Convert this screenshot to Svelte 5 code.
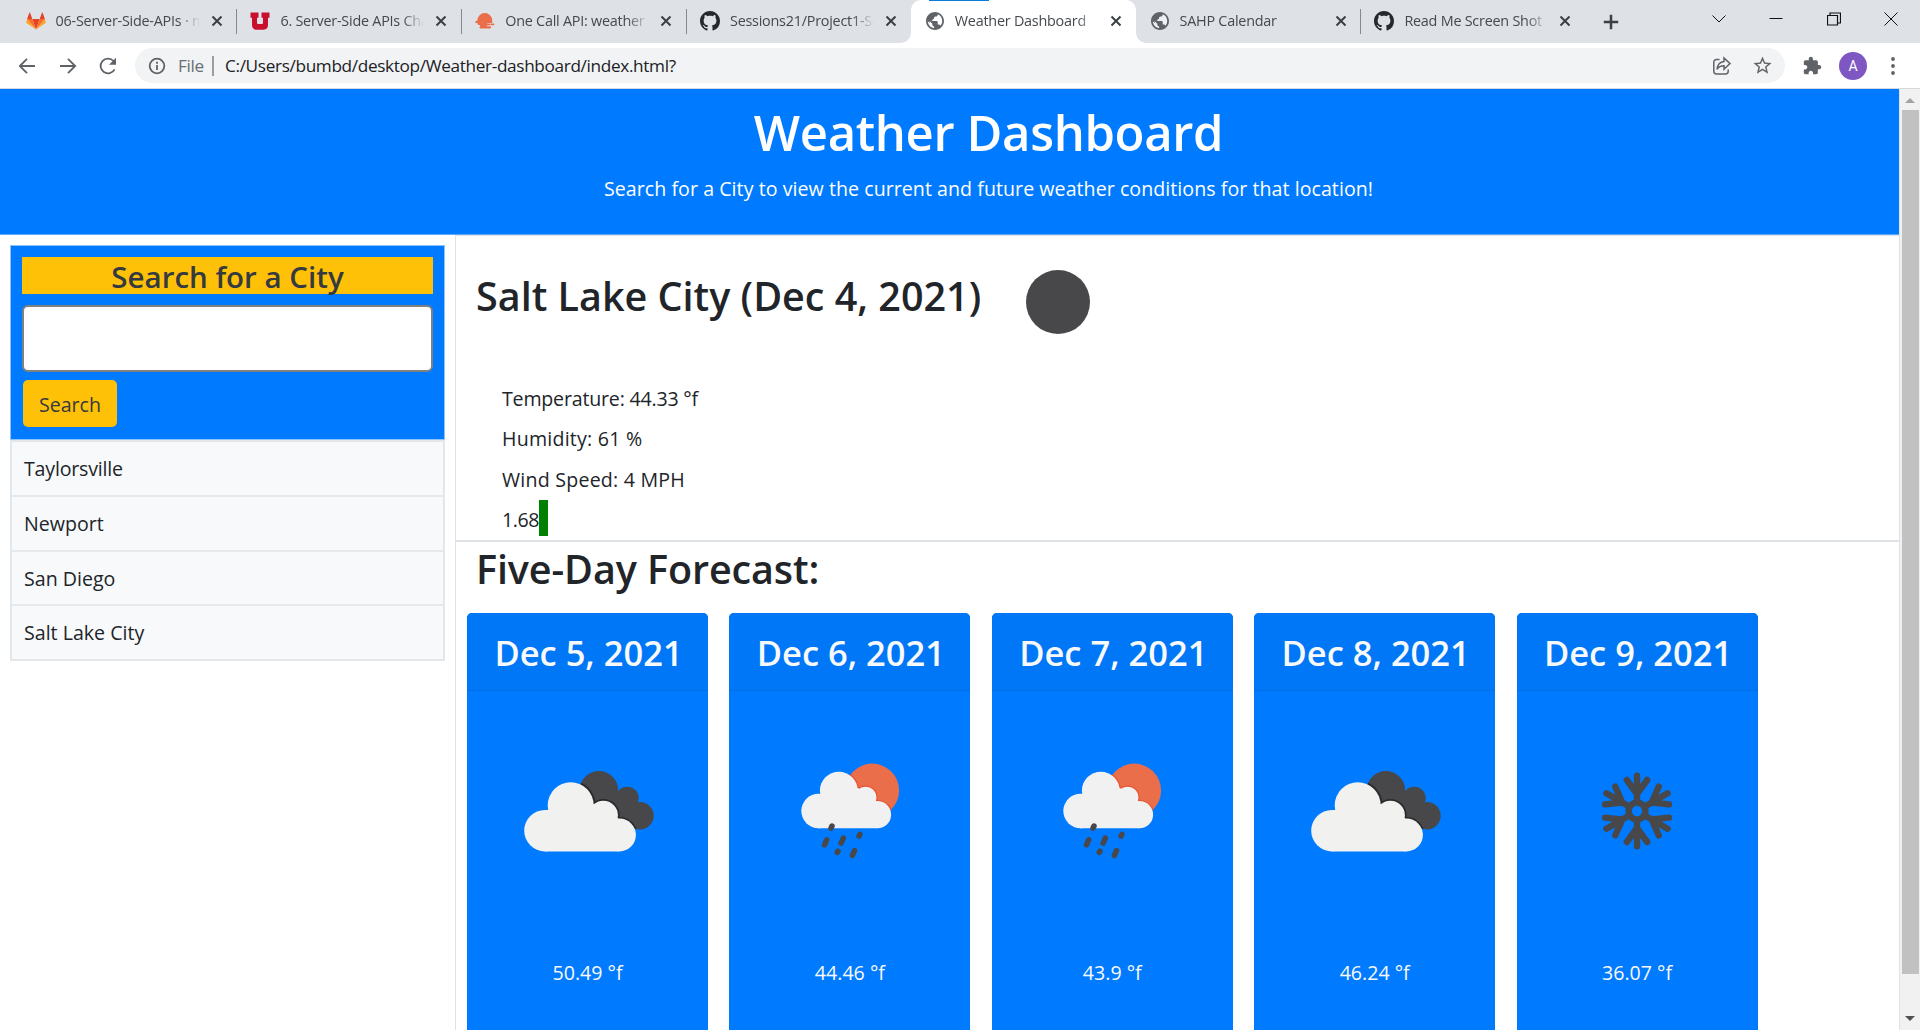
<script>
  const tabs = [
    { title: '06-Server-Side-APIs · main', icon: 'gitlab' },
    { title: '6. Server-Side APIs Challenge', icon: 'utah', sep: true },
    { title: 'One Call API: weather data', icon: 'owm', sep: true },
    { title: 'Sessions21/Project1-Server', icon: 'github', sep: true },
    { title: 'Weather Dashboard', icon: 'globe', active: true },
    { title: 'SAHP Calendar', icon: 'globe' },
    { title: 'Read Me Screen Shot', icon: 'github', sep: true }
  ];
  const cities = ['Taylorsville', 'Newport', 'San Diego', 'Salt Lake City'];
  const forecast = [
    { date: 'Dec 5, 2021', icon: 'clouds', temp: '50.49 °f' },
    { date: 'Dec 6, 2021', icon: 'rain', temp: '44.46 °f' },
    { date: 'Dec 7, 2021', icon: 'rain', temp: '43.9 °f' },
    { date: 'Dec 8, 2021', icon: 'clouds', temp: '46.24 °f' },
    { date: 'Dec 9, 2021', icon: 'snow', temp: '36.07 °f' }
  ];
  const arms = [0, 60, 120, 180, 240, 300];
</script>

<div class="window">
  <div class="strip">
    {#each tabs as t}
      <div class="tab" class:active={t.active} class:sep={t.sep}>
        <svg class="fav" viewBox="0 0 20 20">
          {#if t.icon === 'gitlab'}
            <path fill="#e24329" d="M10 18.5 13.7 8H6.3z" />
            <path fill="#fc6d26" d="M10 18.5 6.3 8H1.1zM10 18.5 13.7 8h5.2z" />
            <path fill="#fca326" d="M1.1 8 .2 11.2c-.1.3 0 .7.3.9L10 18.5zM18.9 8l.9 3.2c.1.3 0 .7-.3.9L10 18.5z" />
            <path fill="#e24329" d="M1.1 8h5.2L4.1 1.8c-.1-.3-.6-.3-.7 0zM18.9 8h-5.2l2.2-6.2c.1-.3.6-.3.7 0z" />
          {:else if t.icon === 'utah'}
            <path fill="#c8102e" d="M.5 1.500h8v5.300H7v4.600c0 1 .6 1.500 1.500 1.500h3c.9 0 1.500-.5 1.500-1.500V6.800h-1.500V1.500h8v5.300H18v7.500c0 2.700-1.700 4.400-4.400 4.400H6.400c-2.700 0-4.400-1.700-4.400-4.400V6.800H.5z" />
          {:else if t.icon === 'owm'}
            <path fill="#eb6e4b" d="M2.400 9.500a7.400 7.400 0 0 1 14.800 0v2.500H1.200a1 1 0 0 1 0-2z" />
            <path fill="#eb6e4b" d="M2 11.500h10.500v2.600H3.200zM5.500 15.200h9.500a1 1 0 0 1 0 2.200H5.500a1.100 1.100 0 0 1 0-2.200zM5 13.500h7v2H5z" />
            <path stroke="#eb6e4b" stroke-width="1.800" stroke-linecap="round" d="M13.500 13.400h.8M16.300 13.400h2.200M12 13.600h0" />
          {:else if t.icon === 'github'}
            <path fill="#24292f" transform="scale(1.25)" d="M8 0C3.58 0 0 3.58 0 8c0 3.54 2.29 6.53 5.47 7.59.4.07.55-.17.55-.38 0-.19-.01-.82-.01-1.49-2.01.37-2.53-.49-2.69-.94-.09-.23-.48-.94-.82-1.13-.28-.15-.68-.52-.01-.53.63-.01 1.08.58 1.23.82.72 1.21 1.87.87 2.33.66.07-.52.28-.87.51-1.07-1.78-.2-3.64-.89-3.64-3.95 0-.87.31-1.59.82-2.15-.08-.2-.36-1.02.08-2.12 0 0 .67-.21 2.2.82.64-.18 1.32-.27 2-.27s1.36.09 2 .27c1.53-1.04 2.2-.82 2.2-.82.44 1.1.16 1.92.08 2.12.51.56.82 1.27.82 2.15 0 3.07-1.87 3.75-3.65 3.95.29.25.54.73.54 1.48 0 1.07-.01 1.93-.01 2.2 0 .21.15.46.55.38A8.01 8.01 0 0 0 16 8c0-4.42-3.58-8-8-8z" />
          {:else}
            <circle cx="10" cy="10" r="8.500" fill="#fff" fill-opacity=".5" />
            <path fill="#5f6368" transform="translate(-.8 -.8) scale(.9)" d="M12 2C6.48 2 2 6.48 2 12s4.48 10 10 10 10-4.48 10-10S17.52 2 12 2zm-1 17.93c-3.95-.49-7-3.85-7-7.93 0-.62.08-1.21.21-1.79L9 15v1c0 1.1.9 2 2 2v1.93zm6.9-2.54c-.26-.81-1-1.39-1.9-1.39h-1v-3c0-.55-.45-1-1-1H8v-2h2c.55 0 1-.45 1-1V7h2c1.1 0 2-.9 2-2v-.41c2.93 1.19 5 4.06 5 7.41 0 2.08-.8 3.97-2.1 5.39z" />
            <path fill="#5f6368" d="M3 6.500 6.500 3l4-.5-.5 3-2 1.500-.5 2.500-3 .5L5 12 2.200 10z" />
          {/if}
        </svg>
        <span class="title">{t.title}</span>
        <svg class="x" viewBox="0 0 12 12"><path d="M1.500 1.500l9 9M10.500 1.500l-9 9" /></svg>
      </div>
    {/each}
    <div class="plus"><svg viewBox="0 0 16 16" width="16" height="16"><path d="M8 .8v14.400M.8 8h14.400" /></svg></div>
    <div class="winbtns">
      <svg viewBox="0 0 14 14"><path d="M.5 3.500 7 10l6.500-6.500" /></svg>
      <svg viewBox="0 0 14 14"><path d="M.5 6.500h13" /></svg>
      <svg viewBox="0 0 14 14"><path d="M.5 3.500h10v9.500H.5zM3 3.500V1h10.500v10H11" stroke-width="1.200" /></svg>
      <svg viewBox="0 0 14 14"><path d="M.5.500l13 13M13.500.500l-13 13" /></svg>
    </div>
    <div class="progress"></div>
  </div>

  <div class="toolbar">
    <div class="nav">
      <svg viewBox="0 0 20 20"><path d="M18 10H3M10 2.800 2.800 10l7.200 7.200" /></svg>
      <svg viewBox="0 0 20 20"><path d="M2 10h15M10 2.800l7.200 7.200-7.200 7.200" /></svg>
      <svg viewBox="0 0 20 20"><path d="M16.600 13.300A7.400 7.400 0 1 1 15.500 5" /><path class="solid" d="M18 1.800v7h-7z" /></svg>
    </div>
    <div class="omni">
      <svg class="info" viewBox="0 0 18 18"><circle cx="9" cy="9" r="7.300" /><path d="M9 8v5M9 4.800v1.900" /></svg>
      <span class="file">File</span>
      <i class="bar"></i>
      <span class="url">C:/Users/bumbd/desktop/Weather-dashboard/index.html?</span>
      <svg class="share" viewBox="0 0 20 20"><path d="M7.500 3.500H4.500A2.700 2.700 0 0 0 1.800 6.200v9A2.700 2.700 0 0 0 4.500 17.900h9a2.700 2.700 0 0 0 2.700-2.700V13.500" /><path d="M12 2v3.500C7.500 6 5.500 9 5 13.300c1.700-2.500 3.800-3.500 7-3.500v3.400l6-5.600z" /></svg>
      <svg class="star" viewBox="1.500 1.500 21 21"><path d="M22 9.240l-7.190-.62L12 2 9.190 8.630 2 9.240l5.460 4.730L5.820 21 12 17.270 18.180 21l-1.630-7.030L22 9.240zM12 15.400l-3.760 2.270 1-4.280-3.320-2.880 4.380-.38L12 6.100l1.710 4.040 4.380.38-3.320 2.880 1 4.280L12 15.400z" /></svg>
    </div>
    <svg class="ext" viewBox="1 0 23 23"><path d="M20.500 11H19V7c0-1.100-.9-2-2-2h-4V3.500C13 2.120 11.880 1 10.500 1S8 2.120 8 3.500V5H4c-1.100 0-1.990.9-1.990 2v3.800H3.500c1.490 0 2.700 1.210 2.700 2.700s-1.210 2.700-2.700 2.700H2V20c0 1.100.9 2 2 2h3.800v-1.500c0-1.490 1.210-2.700 2.700-2.700 1.490 0 2.700 1.210 2.700 2.700V22H17c1.100 0 2-.9 2-2v-4h1.500c1.380 0 2.500-1.120 2.500-2.500S21.880 11 20.500 11z" /></svg>
    <span class="avatar">A</span>
    <svg class="dots" viewBox="0 0 4 18"><circle cx="2" cy="2" r="1.900" /><circle cx="2" cy="9" r="1.900" /><circle cx="2" cy="16" r="1.900" /></svg>
  </div>

  <div class="view">
    <div class="page">
      <header>
        <h1>Weather Dashboard</h1>
        <p class="sub">Search for a City to view the current and future weather conditions for that location!</p>
      </header>
      <div class="columns">
        <aside>
          <form class="search">
            <h2>Search for a City</h2>
            <input type="text" aria-label="City" />
            <button type="button">Search</button>
          </form>
          <ul class="list">
            {#each cities as c}<li>{c}</li>{/each}
          </ul>
        </aside>
        <main>
          <section class="now">
            <div class="head">
              <h2>Salt Lake City (Dec 4, 2021)</h2>
              <span class="moon"></span>
            </div>
            <div class="stats">
              <p class="tight">Temperature: 44.33 °f</p>
              <p class="wide">Humidity: 61 %</p>
              <p class="wide">Wind Speed: 4 MPH</p>
              <p class="uv">1.68<i></i></p>
            </div>
          </section>
          <h2 class="five">Five-Day Forecast:</h2>
          <div class="cards">
            {#each forecast as f, i}
              <article class="card">
                <h3>{f.date}</h3>
                <svg viewBox="0 0 200 200">
                  {#if f.icon === 'clouds'}
                    <defs>
                      <clipPath id="dark{i}"><circle cx="110.900" cy="79.300" r="19.300" /><circle cx="139.200" cy="87.200" r="11.500" /><circle cx="152" cy="104.700" r="13.700" /><path d="M94 88 130 82 152 95V118.400L125 115z" /></clipPath>
                    </defs>
                    <g clip-path="url(#dark{i})">
                      <rect width="200" height="200" fill="#48484a" />
                      <g fill="#2b2b2e"><circle cx="82.700" cy="94.300" r="25" /><circle cx="115.400" cy="104.200" r="16.300" /><circle cx="131.500" cy="124" r="18" /></g>
                    </g>
                    <g fill="#f1f1f0"><circle cx="82.700" cy="94.300" r="23" /><circle cx="56.900" cy="119.700" r="20.700" /><circle cx="115.400" cy="104.200" r="14.500" /><circle cx="131.500" cy="124" r="16.400" /><path d="M57 99h25l24-6 25 15v32.400H57z" /></g>
                  {:else if f.icon === 'rain'}
                    <circle cx="122.200" cy="79.500" r="26.900" fill="#eb6e4b" />
                    <clipPath id="sun{i}"><circle cx="122.200" cy="79.500" r="26.900" /></clipPath>
                    <g fill="#e8532f" clip-path="url(#sun{i})"><circle cx="88.800" cy="79.600" r="20.200" /><circle cx="115.600" cy="86.500" r="12" /><circle cx="127.500" cy="103.700" r="14.800" /></g>
                    <g fill="#f1f1f2"><circle cx="88.800" cy="79.600" r="18.900" /><circle cx="68.600" cy="100" r="17.300" /><circle cx="115.600" cy="86.500" r="10.800" /><circle cx="127.500" cy="103.700" r="13.600" /><path d="M68 83h20l20-6 19 14v26.300H68z" /></g>
                    <path class="drops" d="M82 115l-1 2.200M76.700 128.800l-2.200 5M93.300 127.100l-2.200 5M109.900 123.500l-.9 1.600M88 140.200l-.8 1.200M104.500 139.600l-2.100 4.800" />
                  {:else}
                    <g class="flake" transform="translate(100 100)">
                      <circle r="8.400" />
                      {#each arms as a}<path transform="rotate({a})" d="M0-10V-35.300M-10.200-31 0-17 10.200-31" />{/each}
                    </g>
                  {/if}
                </svg>
                <p>{f.temp}</p>
              </article>
            {/each}
          </div>
        </main>
      </div>
    </div>
    <div class="scroll">
      <svg viewBox="0 0 10 5"><path fill="#a3a3a3" d="M0 5 5 0l5 5z" /></svg>
      <div class="thumb"></div>
      <svg viewBox="0 0 10 5"><path fill="#505050" d="M0 0h10L5 5z" /></svg>
    </div>
  </div>
</div>

<style>
  :global(body) { margin: 0; overflow: hidden; }
  :global(*) { box-sizing: border-box; }
  h1, h2, h3, p, ul { margin: 0; padding: 0; font-weight: inherit; }
  .window { width: 1920px; height: 1030px; overflow: hidden; display: flex; flex-direction: column; background: #fff; color: #212529; font-family: "Open Sans", "Noto Sans", sans-serif; }

  .strip { position: relative; flex: none; height: 43px; display: flex; background: #dee1e6; padding-left: 11.600px; }
  .tab { position: relative; width: 224.800px; height: 43px; display: flex; align-items: center; padding: 0 13px 1px 14px; font-size: 14.400px; letter-spacing: -.24px; color: #45494d; }
  .tab.sep::before { content: ""; position: absolute; left: 0; top: 9px; width: 1px; height: 25px; background: #85888c; }
  .tab.active { background: #fff; border-radius: 10px 10px 0 0; }
  .tab.active::before, .tab.active::after { content: ""; position: absolute; bottom: 0; width: 10px; height: 10px; }
  .tab.active::before { left: -10px; background: radial-gradient(circle at 0 0, #dee1e6 9.500px, #fff 10px); }
  .tab.active::after { right: -10px; background: radial-gradient(circle at 100% 0, #dee1e6 9.500px, #fff 10px); }
  .fav { flex: none; width: 20px; height: 20px; margin-right: 10px; }
  .title { flex: none; width: 146px; overflow: hidden; white-space: nowrap; line-height: 22px; padding-bottom: 1px; -webkit-mask-image: linear-gradient(90deg, #000 122px, transparent 144px); mask-image: linear-gradient(90deg, #000 122px, transparent 144px); }
  .x { flex: none; width: 12px; height: 12px; margin-left: 9px; fill: none; stroke: #3c4043; stroke-width: 2; }
  .plus { display: flex; align-items: center; margin-left: 17.500px; fill: none; stroke: #3c4043; stroke-width: 2.500; }
  .winbtns { display: flex; gap: 43.300px; margin-left: auto; padding: 12px 22px 0 0; }
  .winbtns svg { width: 14px; height: 14px; fill: none; stroke: #111; stroke-width: 1; }
  .progress { position: absolute; left: 929px; top: 0; width: 60px; height: 1px; background: #0a7ad8; }

  .toolbar { flex: none; height: 46px; display: flex; align-items: center; border-bottom: 1px solid #d5d8dc; padding: 0 25px 0 17px; }
  .nav { display: flex; gap: 20.500px; margin-right: 17px; }
  .nav svg { width: 20px; height: 20px; fill: none; stroke: #5f6368; stroke-width: 1.800; }
  .nav .solid { fill: #5f6368; stroke: none; }
  .omni { flex: 1; height: 35px; border-radius: 18px; background: #f1f3f4; display: flex; align-items: center; padding: 0 13px 0 13px; font-size: 17.200px; letter-spacing: -.34px; }
  .info { width: 18px; height: 18px; fill: none; stroke: #5f6368; stroke-width: 1.800; }
  .file { margin-left: 12px; color: #6a6e73; width: 34px; white-space: nowrap; }
  .bar { width: 2px; height: 20px; background: #9a9da1; margin-right: 11px; }
  .url { white-space: nowrap; color: #202124; }
  .share { width: 20px; height: 20px; margin-left: auto; fill: none; stroke: #5f6368; stroke-width: 1.500; }
  .star { width: 19px; height: 19px; margin-left: 21px; fill: #5f6368; }
  .ext { width: 19px; height: 19px; margin-left: 18px; fill: #5f6368; }
  .avatar { width: 28px; height: 28px; margin-left: 17px; border-radius: 50%; background: #7e57c2; color: #fff; font: 14px/28px Roboto, sans-serif; text-align: center; }
  .dots { width: 4px; height: 18px; margin-left: 24px; fill: #5f6368; }

  .view { flex: 1; display: flex; min-height: 0; }
  .page { width: 1899px; overflow: hidden; font-size: 19.600px; display: flex; flex-direction: column; }
  header { flex: none; height: 146px; background: #007bff; color: #fff; text-align: center; padding: 13px 0 0 78px; border-bottom: 1px solid #5aabff; }
  h1 { font-size: 49px; line-height: 60px; font-weight: 600; letter-spacing: -.36px; }
  .sub { margin-top: 12px; line-height: 30px; letter-spacing: .05px; }
  .columns { flex: 1; display: flex; }
  aside { width: 455px; padding: 10px; }
  .search { height: 195px; background: #007bff; border: 1px solid #8fc3fb; padding: 11px; display: flex; flex-direction: column; align-items: flex-start; }
  .search h2 { width: 411px; height: 37px; font-size: 29.500px; line-height: 39px; font-weight: 600; text-align: center; background: #ffc107; color: #343a40; }
  input { width: 411px; height: 67px; margin: 11px 0 8px; border: 2px solid #808080; border-radius: 6px; background: #fff; }
  button { width: 94px; height: 47px; margin-left: 1px; border: 0; border-radius: 5px; background: #ffc107; color: #343a40; font: inherit; padding: 1px 0 0; }
  .list { list-style: none; height: 220.500px; border: 2px solid #e3e7ea; background: #f8f9fa; }
  li { height: 54.500px; line-height: 54.500px; padding-left: 12px; border-top: 2px solid #e6e9eb; }
  li:first-child { border: 0; height: 53px; line-height: 53px; letter-spacing: -.2px; }
  main { flex: 1; border-left: 1px solid #dee2e6; }
  .now { height: 307px; border-top: 1px solid #dee2e6; border-bottom: 2px solid #dee2e6; padding: 33px 0 0 20px; }
  .head { display: flex; }
  .head h2, .five { font-size: 39.500px; line-height: 48px; font-weight: 600; white-space: nowrap; }
  .head h2 { width: 550px; padding-top: 3px; }
  .moon { width: 64px; height: 64px; margin-top: 1px; border-radius: 50%; background: #48484a; }
  .stats { padding: 44.500px 0 0 26px; line-height: 40.600px; }
  .tight { letter-spacing: -.2px; }
  .wide { letter-spacing: .22px; }
  .uv { display: flex; align-items: center; letter-spacing: -.4px; }
  .uv i { width: 9px; height: 36px; background: #008000; margin-top: -5px; }
  .five { padding: 3px 0 0 20px; height: 71px; letter-spacing: -.1px; }
  .cards { display: flex; gap: 21.400px; padding-left: 11px; }
  .card { width: 241px; height: 440px; border-radius: 5px 5px 0 0; background: #007bff; color: #f8f9fa; text-align: center; display: flex; flex-direction: column; align-items: center; }
  .card h3 { width: 100%; height: 78px; font-size: 34.500px; line-height: 80px; padding-left: 2px; font-weight: 600; background: #0077f7; border-bottom: 1px solid #006fe5; border-radius: 5px 5px 0 0; }
  .card svg { width: 200px; height: 200px; margin-top: 20px; }
  .card p { margin-top: 46.500px; line-height: 30px; }
  .drops { stroke: #48484a; stroke-width: 5.500; stroke-linecap: round; fill: none; }
  .flake { stroke: #48484a; stroke-width: 6.400; stroke-linecap: round; fill: none; }
  .scroll { width: 21px; background: #f1f1f1; border-left: 1px solid #e2e2e2; display: flex; flex-direction: column; align-items: center; padding: 9px 0; }
  .scroll svg { width: 10px; height: 5px; }
  .thumb { width: 17px; height: 864px; margin: 7px 0 auto; background: #c1c1c1; }
</style>
